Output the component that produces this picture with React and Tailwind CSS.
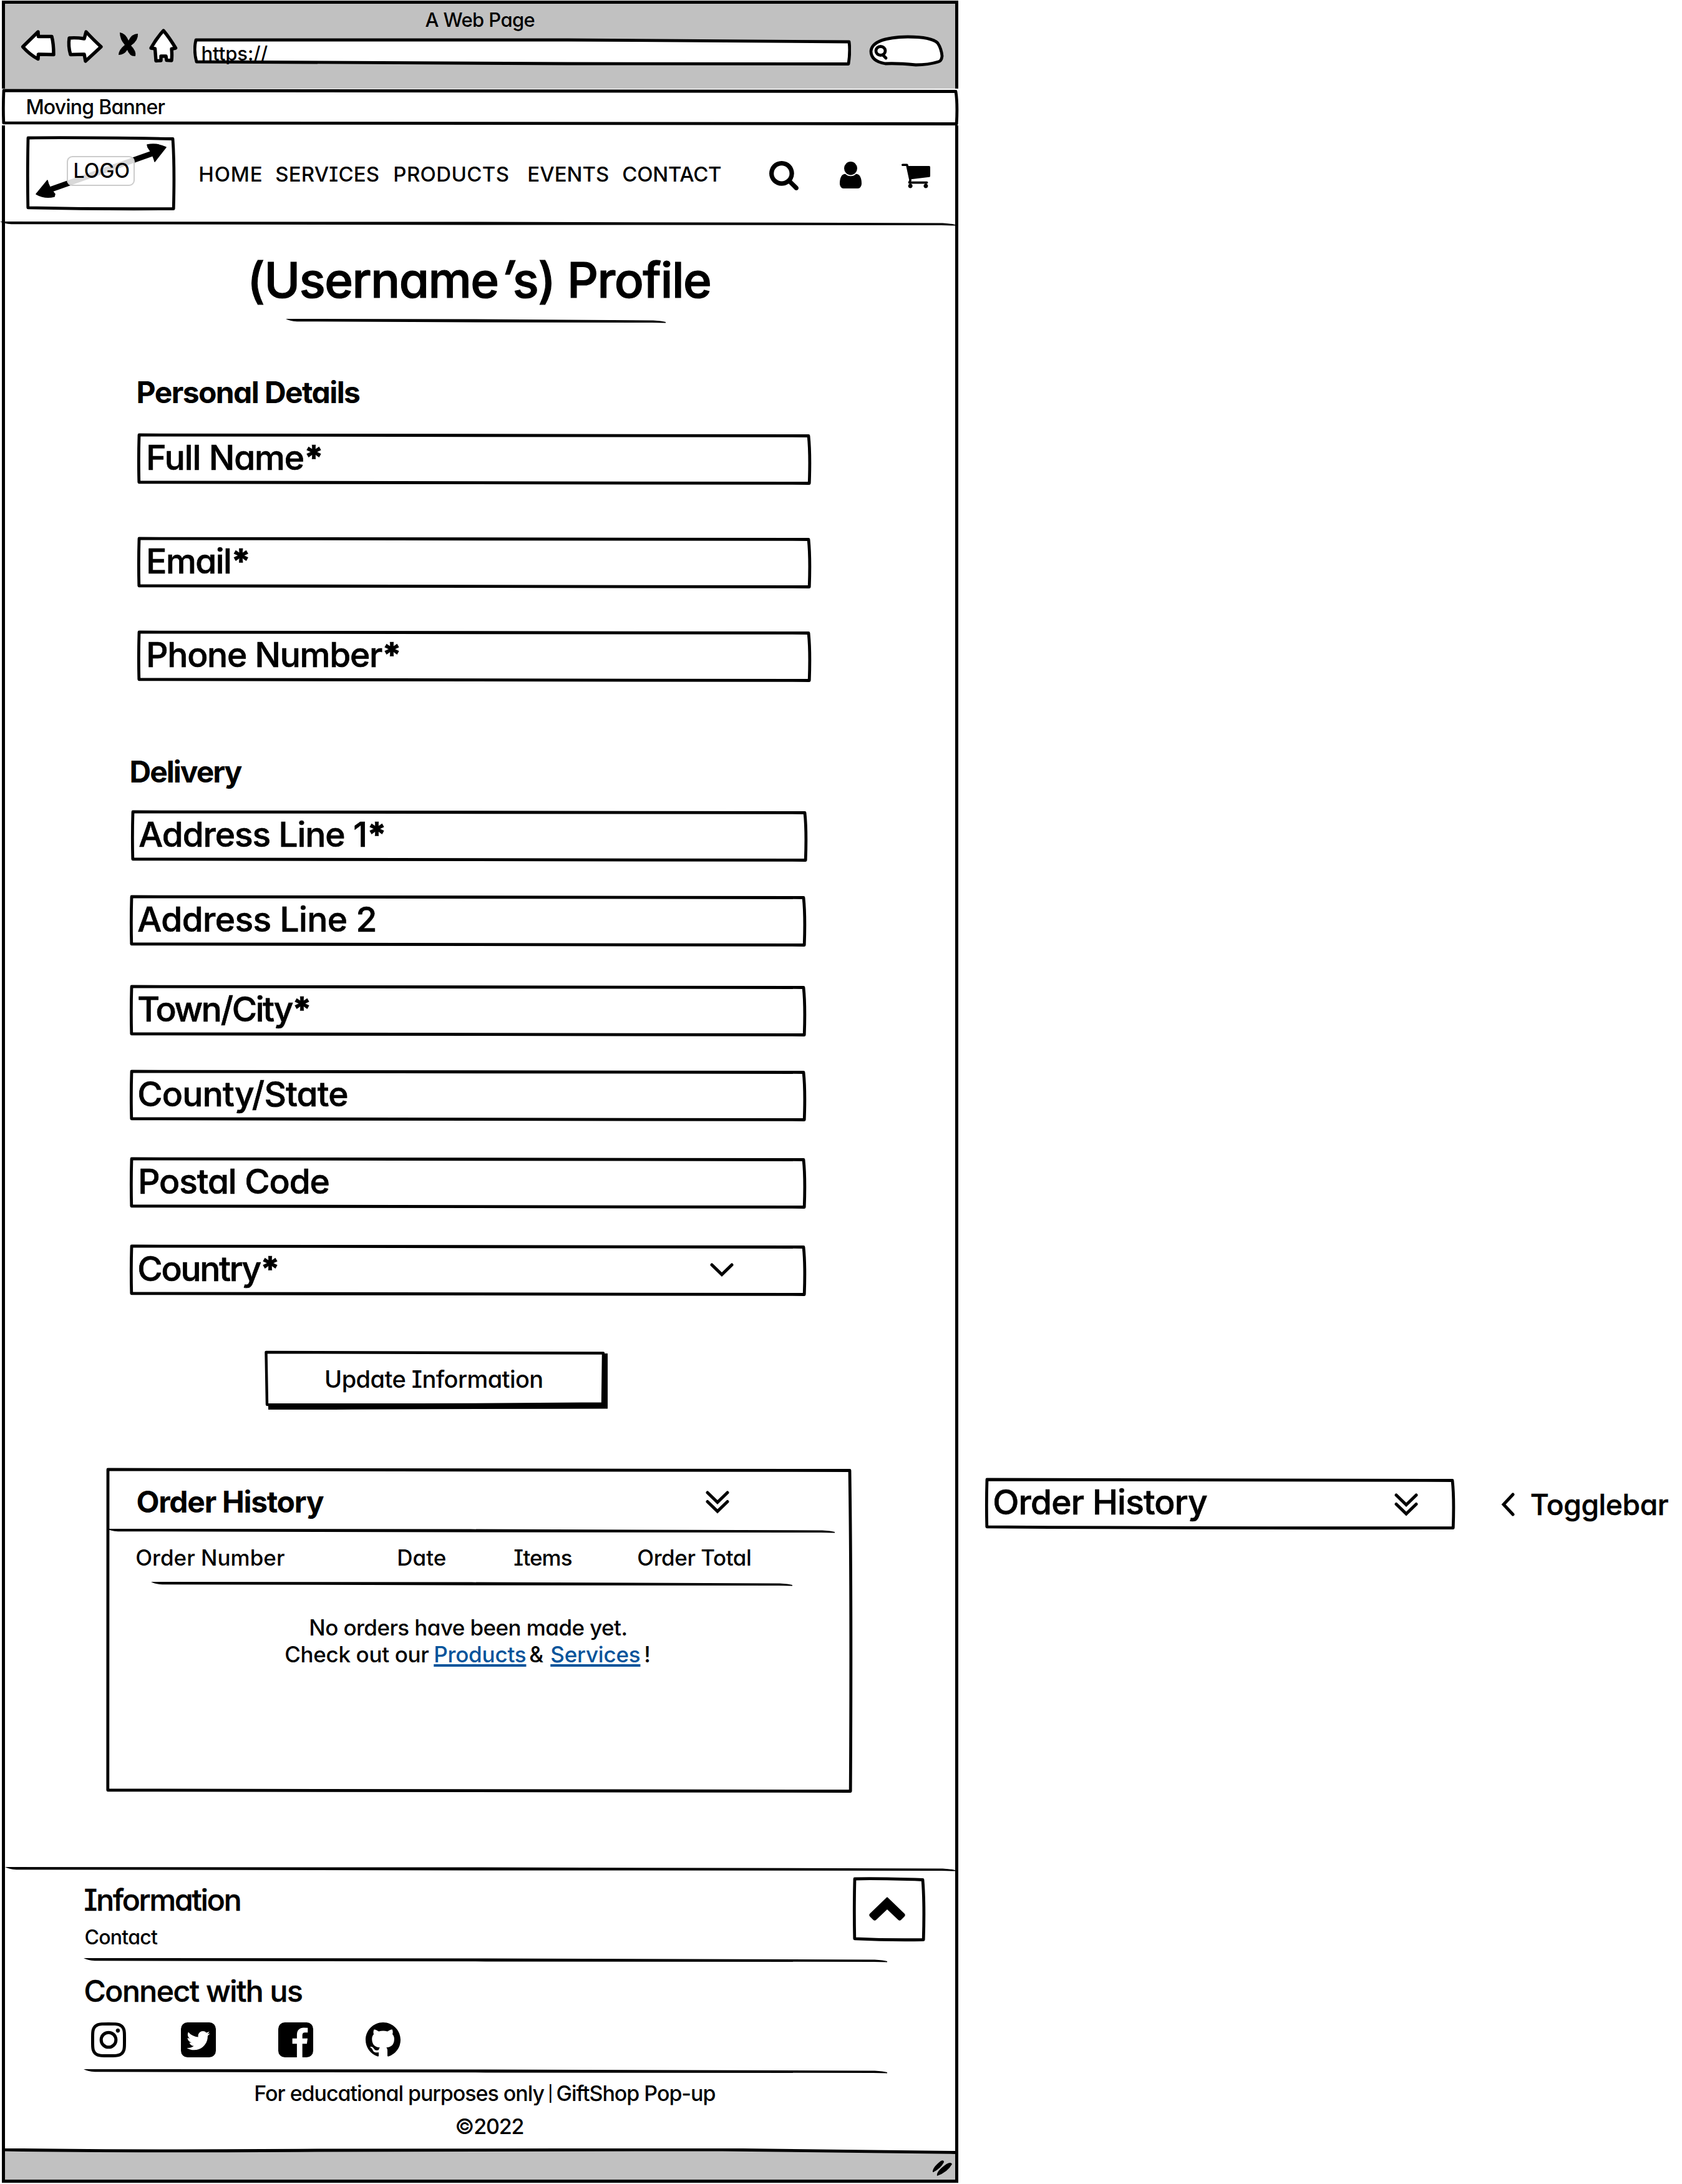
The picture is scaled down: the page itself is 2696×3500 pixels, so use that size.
import { useLayoutEffect, useRef } from "react";

/* Text that is tracked so that it fills the given width. */
function T({ w, className = "", children }) {
  const ref = useRef(null);
  useLayoutEffect(() => {
    const el = ref.current;
    el.style.letterSpacing = "0px";
    const size = parseFloat(getComputedStyle(el).fontSize);
    const natural = el.getBoundingClientRect().width;
    const count = Math.max(1, el.textContent.length);
    el.style.letterSpacing = (w + size * 0.12 - natural) / count + "px";
    el.style.marginLeft = -size * 0.05 + "px";
  }, [w]);
  return (
    <div className={"shrink-0 whitespace-nowrap " + className} style={{ width: w }}>
      <span ref={ref} className="relative top-px inline-block">{children}</span>
    </div>
  );
}

/* Hand-drawn rectangular outline laid over a box. */
function Outline({ w, h, stroke = 4.8 }) {
  const d = `M3 3 Q${w * 0.35} 2 ${w - 3} 4.5 Q${w} ${h * 0.4} ${w - 1.8} ${h - 2.5} Q${w * 0.5} ${h - 1.5} 2.8 ${h - 4.2} Q1.8 ${h * 0.5} 3 3Z`;
  return (
    <svg className="pointer-events-none absolute inset-0 overflow-visible" width={w} height={h} viewBox={`0 0 ${w} ${h}`} fill="none">
      <path d={d} stroke="#000" strokeWidth={stroke} strokeLinejoin="round" />
    </svg>
  );
}

/* Hand-drawn rule with tapered ends. */
function Rule({ w, className = "" }) {
  return (
    <svg className={"block shrink-0 " + className} width={w} height="8" viewBox={`0 0 ${w} 8`}>
      <path d={`M0 1 L${w * 0.5} 1.6 L${w - 20} 3.4 Q${w - 6} 4.2 ${w} 6 L${w} 7.6 L${w - 22} 7 L${w * 0.5} 6.4 L18 5.2 Q6 4.6 0 1Z`} />
    </svg>
  );
}

function Glyph({ d, size, className = "" }) {
  return (
    <svg className={"shrink-0 " + className} width={size} height={size} viewBox="128 128 1536 1536">
      <path d={d} />
    </svg>
  );
}

const SEARCH = "M1216 832q0-185-131.5-316.5t-316.5-131.5-316.5 131.5-131.5 316.5 131.5 316.5 316.5 131.5 316.5-131.5 131.5-316.5zm512 832q0 52-38 90t-90 38q-54 0-90-38l-343-342q-179 124-399 124-143 0-273.5-55.5t-225-150-150-225-55.5-273.5 55.5-273.5 150-225 225-150 273.5-55.5 273.5 55.5 225 150 150 225 55.5 273.5q0 220-124 399l343 343q37 37 37 90z";
const USER = "M1536 1399q0 109-62.5 187t-150.5 78h-854q-88 0-150.5-78t-62.5-187q0-85 8.5-160.5t31.5-152 58.5-131 94-89 134.5-34.5q131 128 313 128t313-128q76 0 134.5 34.5t94 89 58.5 131 31.5 152 8.5 160.5zm-256-887q0 159-112.5 271.5t-271.5 112.5-271.5-112.5-112.5-271.5 112.5-271.5 271.5-112.5 271.5 112.5 112.5 271.5z";
const CART = "M704 1536q0 52-38 90t-90 38-90-38-38-90 38-90 90-38 90 38 38 90zm896 0q0 52-38 90t-90 38-90-38-38-90 38-90 90-38 90 38 38 90zm128-1088v512q0 24-16.5 42.5t-40.5 21.5l-1044 122q13 60 13 70 0 16-24 64h920q26 0 45 19t19 45-19 45-45 19h-1024q-26 0-45-19t-19-45q0-11 8-31.5t16-36 21.5-40 15.5-29.5l-177-823h-204q-26 0-45-19t-19-45 19-45 45-19h256q16 0 28.5 6.5t19.5 15.5 13 24.5 8 26 5.5 29.5 4.5 26h1201q26 0 45 19t19 45z";
const INSTAGRAM = "M1152 896q0-106-75-181t-181-75-181 75-75 181 75 181 181 75 181-75 75-181zm138 0q0 164-115 279t-279 115-279-115-115-279 115-279 279-115 279 115 115 279zm108-410q0 38-27 65t-65 27-65-27-27-65 27-65 65-27 65 27 27 65zm-502-220q-7 0-76.5-.5t-105.5 0-96.5 3-103 10-71.5 18.5q-50 20-88 58t-58 88q-11 29-18.5 71.5t-10 103-3 96.5 0 105.5.5 76.5-.5 76.5 0 105.5 3 96.5 10 103 18.5 71.5q20 50 58 88t88 58q29 11 71.5 18.5t103 10 96.5 3 105.5 0 76.5-.5 76.5.5 105.5 0 96.5-3 103-10 71.5-18.5q50-20 88-58t58-88q11-29 18.5-71.5t10-103 3-96.5 0-105.5-.5-76.5.5-76.5 0-105.5-3-96.5-10-103-18.5-71.5q-20-50-58-88t-88-58q-29-11-71.5-18.5t-103-10-96.5-3-105.5 0-76.5.5zm768 630q0 229-5 317-10 208-124 322t-322 124q-88 5-317 5t-317-5q-208-10-322-124t-124-322q-5-88-5-317t5-317q10-208 124-322t322-124q88-5 317-5t317 5q208 10 322 124t124 322q5 88 5 317z";
const TWITTER = "M1408 610q-56 25-121 34 68-40 93-117-65 38-134 51-61-66-153-66-87 0-148.5 61.5t-61.5 148.5q0 29 5 48-129-7-242-65t-192-155q-29 50-29 106 0 114 91 175-47-1-100-26v2q0 75 50 133.5t123 72.5q-29 8-51 8-13 0-39-4 21 63 74.5 104t121.5 42q-116 90-261 90-26 0-50-3 148 94 322 94 112 0 210-35.5t168-95 120.5-137 75-162 24.5-168.5q0-18-1-27 63-45 105-109zm256-194v960q0 119-84.5 203.5t-203.5 84.5h-960q-119 0-203.5-84.5t-84.5-203.5v-960q0-119 84.5-203.5t203.5-84.5h960q119 0 203.5 84.5t84.5 203.5z";
const FACEBOOK = "M1376 128q119 0 203.5 84.5t84.5 203.5v960q0 119-84.5 203.5t-203.5 84.5h-188v-595h199l30-232h-229v-148q0-56 23.5-84t91.5-28l122-1v-207q-63-9-178-9-136 0-217.5 80t-81.5 226v171h-200v232h200v595h-532q-119 0-203.5-84.5t-84.5-203.5v-960q0-119 84.5-203.5t203.5-84.5h960z";
const GITHUB = "M8 0C3.58 0 0 3.58 0 8c0 3.54 2.29 6.53 5.47 7.59.4.07.55-.17.55-.38 0-.19-.01-.82-.01-1.49-2.01.37-2.53-.49-2.69-.94-.09-.23-.48-.94-.82-1.13-.28-.15-.68-.52-.01-.53.63-.01 1.08.58 1.23.82.72 1.21 1.87.87 2.33.66.07-.52.28-.87.51-1.07-1.78-.2-3.64-.89-3.64-3.95 0-.87.31-1.59.82-2.15-.08-.2-.36-1.02.08-2.12 0 0 .67-.21 2.2.82.64-.18 1.32-.27 2-.27.68 0 1.36.09 2 .27 1.53-1.04 2.2-.82 2.2-.82.44 1.1.16 1.92.08 2.12.51.56.82 1.27.82 2.15 0 3.07-1.87 3.75-3.65 3.95.29.25.54.73.54 1.48 0 1.07-.01 1.93-.01 2.2 0 .21.15.46.55.38A8.013 8.013 0 0016 8c0-4.42-3.58-8-8-8z";

function DoubleChevron({ className = "" }) {
  return (
    <svg className={"shrink-0 " + className} width="38" height="37" viewBox="0 0 38 37" fill="none" stroke="#000" strokeWidth="5" strokeLinecap="round">
      <path d="M3 3 L19 18.5 L35 3 M3 17.5 L19 33 L35 17.5" />
    </svg>
  );
}

function Field({ label, tw, w, className = "", inset = "pl-[15px]", children }) {
  return (
    <div className={"relative flex h-[83px] shrink-0 items-center pb-[6px] text-[55px] [-webkit-text-stroke:0.7px_#000] " + inset + " " + className} style={{ width: w }}>
      <Outline w={w} h={83} />
      <T w={tw}>{label}</T>
      {children}
    </div>
  );
}

function Star() {
  return <span className="font-extrabold">*</span>;
}

function Toolbar() {
  return (
    <div className="h-[136px] shrink-0 bg-[#c1c1c1]">
      <div className="flex h-[40px] items-center pt-[8px] pl-[675px] text-[31px]">
        <T w={172}>A Web Page</T>
      </div>
      <div className="flex h-[60px] items-start">
        <svg className="ml-[24px] shrink-0" width="270" height="60" viewBox="32 46 270 60" fill="#fff" stroke="#000" strokeWidth="5.4" strokeLinejoin="round">
          <path d="M36.5 75 L61 51 L61.5 58.5 L83 58.5 Q86 70 86 87.5 L61.5 87 L61 94.5 Q48 88 36.5 75Z" />
          <path d="M111 61 Q122 60 135 62 L138 51 Q148 62 162 75 L137 98 L135 87 L113 87.5 Q109 74 111 61Z" />
          <path d="M262 49 Q272 61 281.5 77 L275 78.5 Q276 88 275 97 L267 96.5 L266 90 L258 90 L258 97 L250 97.5 L248.5 78 L242 77 Q251 61 262 49Z" />
          <path d="M192 52 Q201 53 206 65 Q211 54 221 54 Q222 65 210 73 Q219 82 217 90 Q208 91 204 80 Q199 88 190 88 Q190 80 200 72 Q192 63 192 52Z" fill="#000" stroke="none" />
        </svg>
        <div className="relative mt-[15px] ml-[8px] flex h-[44px] w-[1054px] shrink-0 items-center pt-[2px] pl-[14px] text-[31px]">
          <svg className="absolute inset-0" width="1054" height="44" viewBox="0 0 1054 44">
            <path d="M4 3 L600 3 L1051 6 Q1053 22 1050 41.5 L600 41 L5 38 Q0 20 4 3Z" fill="#fff" stroke="#000" strokeWidth="4.8" strokeLinejoin="round" />
          </svg>
          <T w={103} className="relative">https://</T>
        </div>
        <svg className="mt-[10px] ml-[29px] shrink-0" width="120" height="51" viewBox="0 0 120 51" fill="#fff" stroke="#000" strokeWidth="4.8" strokeLinecap="round" strokeLinejoin="round">
          <path d="M26 46 Q3 42 3 26 Q5 4 62 3 Q100 3 110 13 Q116 22 117 34 Q116 42 111 43 Q95 48 75 48 Q45 45 26 46Z" />
          <ellipse cx="18.5" cy="25.5" rx="7.5" ry="7" />
          <path d="M22 32 L27 37" />
        </svg>
      </div>
    </div>
  );
}

function Header() {
  return (
    <div className="flex h-[153px] shrink-0 items-start">
      <div className="relative mt-[17px] ml-[34px] flex h-[119px] w-[238px] shrink-0 items-start">
        <svg className="absolute inset-0" width="238" height="119" viewBox="0 0 238 119">
          <path d="M24 91 L216 23" stroke="#000" strokeWidth="9" />
          <path d="M16 93 L34 71 Q36 82 46 93 L45 97 Q30 101 16 93Z M224 18 L206 41 Q203 29 195 18 L194 14 Q210 11 224 18Z" stroke="#000" strokeWidth="1.5" strokeLinejoin="round" />
        </svg>
        <Outline w={238} h={119} />
        <div className="relative mt-[32px] ml-[65px] flex h-[48px] w-[109px] items-center rounded-[9px] border-2 border-[#cccccc] bg-white/85 pb-[2px] pl-[10px] text-[32px]">
          <T w={87}>LOGO</T>
        </div>
      </div>
      <div className="mt-[59px] flex h-[36px] items-center text-[33px]">
        <T w={99} className="ml-[40px]">HOME</T>
        <T w={163} className="ml-[24px]">SERVICES</T>
        <T w={182} className="ml-[26px]">PRODUCTS</T>
        <T w={127} className="ml-[33px]">EVENTS</T>
        <T w={155} className="ml-[25px]">CONTACT</T>
      </div>
      <svg className="mt-[57px] ml-[79px] shrink-0" width="47" height="47" viewBox="64 128 1664 1664"><path d={SEARCH} /></svg>
      <svg className="mt-[58px] ml-[66px] shrink-0" width="35" height="43" viewBox="256 128 1280 1536" preserveAspectRatio="none"><path d={USER} /></svg>
      <svg className="mt-[61px] ml-[64px] shrink-0" width="46" height="40" viewBox="64 256 1664 1408"><path d={CART} /></svg>
    </div>
  );
}

function Orders() {
  return (
    <div className="relative mt-[93px] ml-[162px] flex h-[521px] w-[1195px] shrink-0 flex-col">
      <Outline w={1195} h={521} />
      <div className="flex h-[97px] shrink-0 items-center pt-[11px] pl-[51px] text-[48px] font-bold">
        <T w={294}>Order History</T>
        <DoubleChevron className="mt-[3px] ml-[616px]" />
      </div>
      <Rule w={1167} className="ml-[1px]" />
      <div className="flex h-[77px] shrink-0 items-center pl-[49px] text-[35px]">
        <T w={235}>Order Number</T>
        <T w={75} className="ml-[184px]">Date</T>
        <T w={89} className="ml-[112px]">Items</T>
        <T w={179} className="ml-[109px]">Order Total</T>
      </div>
      <Rule w={1028} className="ml-[72px]" />
      <div className="mt-[44px] text-[35px] leading-[43px]">
        <T w={506} className="ml-[327px]">No orders have been made yet.</T>
        <div className="ml-[288px] flex">
          <T w={227}>Check out our</T>
          <T w={144} className="ml-[12px] text-[#05549b] [&>span]:underline [&>span]:decoration-4 [&>span]:underline-offset-[3px] [&>span]:[text-decoration-skip-ink:none]">Products</T>
          <T w={23} className="ml-[9px]">&amp;</T>
          <T w={140} className="ml-[11px] text-[#05549b] [&>span]:underline [&>span]:decoration-4 [&>span]:underline-offset-[3px] [&>span]:[text-decoration-skip-ink:none]">Services</T>
          <T w={6} className="ml-[10px]">!</T>
        </div>
      </div>
    </div>
  );
}

function Footer() {
  return (
    <>
      <div className="flex h-[130px] shrink-0 items-start">
        <div className="ml-[129px] w-[1230px] shrink-0 pt-[21px]">
          <T w={245} className="text-[48px] leading-[48px] [-webkit-text-stroke:0.5px_#000]">Information</T>
          <T w={113} className="mt-[20px] text-[32px] leading-[32px]">Contact</T>
        </div>
        <div className="relative mt-[9px] h-[103px] w-[115px] shrink-0">
          <Outline w={115} h={103} />
          <svg className="mt-[31px] ml-[25px]" width="60" height="39" viewBox="0 0 60 39">
            <path d="M30 2 L57 28 Q59 30 57 32 L52 37 Q50 39 48 37 L30 20 L12 37 Q10 39 8 37 L3 32 Q1 30 3 28 Z" stroke="#000" strokeWidth="1.5" strokeLinejoin="round" />
          </svg>
        </div>
      </div>
      <Rule w={1288} className="mt-[8px] ml-[126px]" />
      <T w={344} className="mt-[21px] ml-[129px] text-[48px] leading-[48px] [-webkit-text-stroke:0.5px_#000]">Connect with us</T>
      <div className="mt-[27px] ml-[138px] flex h-[56px] shrink-0">
        <Glyph d={INSTAGRAM} size={56} />
        <Glyph d={TWITTER} size={56} className="ml-[88px]" />
        <Glyph d={FACEBOOK} size={56} className="ml-[100px]" />
        <svg className="ml-[84px] shrink-0" width="56" height="56" viewBox="0 0 16 16"><path d={GITHUB} /></svg>
      </div>
      <Rule w={1288} className="mt-[18px] ml-[126px]" />
      <T w={735} className="mt-[13px] ml-[401px] text-[34px] leading-[36px]">
        For educational purposes only <span className="relative -top-[3px] -mx-[2px] text-[25px]">|</span> GiftShop Pop-up
      </T>
      <T w={106} className="mt-[14px] ml-[723px] text-[34px] leading-[36px]">©2022</T>
      <div className="relative mt-auto h-[50px] shrink-0">
        <svg className="block" width="1523" height="50" viewBox="0 0 1523 50">
          <path d="M0 2 Q200 5 500 3 L1150 2 Q1380 4 1523 6.5 V50 H0Z" fill="#c1c1c1" />
          <path d="M0 2 Q200 5 500 3 L1150 2 Q1380 4 1523 6.5" fill="none" stroke="#000" strokeWidth="4.8" />
          <path d="M1487 38 Q1486 31 1500 20 Q1505 18 1505 22 Q1500 32 1488 38Z M1494 44 Q1492 37 1509 25 Q1516 21 1518 25 Q1511 38 1494 44Z" />
        </svg>
      </div>
    </>
  );
}

export default function App() {
  return (
    <div className="flex h-[3500px] w-[2696px] overflow-hidden bg-white font-['Inter',sans-serif] font-medium text-black [font-feature-settings:'cv11','cv08']">
      <div className="mt-px ml-[3px] flex h-[3497px] w-[1533px] shrink-0 flex-col border-[5px] border-black leading-none">
        <Toolbar />
        <div className="relative -mx-[5px] flex h-[59px] shrink-0 items-center bg-white pb-[2px] pl-[40px] text-[32px]">
          <Outline w={1532} h={59} />
          <T w={219}>Moving Banner</T>
        </div>
        <Header />
        <Rule w={1531} className="-ml-[8px]" />

        <T w={734} className="mt-[46px] ml-[392px] text-[78px] leading-[80px] [-webkit-text-stroke:1.2px_#000]">
          (Username<span className="inline-block -translate-y-[3px] -skew-x-[20deg]">'</span>s) Profile
        </T>
        <Rule w={609} className="mt-[22px] ml-[450px]" />

        <T w={352} className="mt-[86px] ml-[213px] text-[48px] leading-[48px] font-bold">Personal Details</T>
        <Field label={<>Full Name<Star /></>} tw={277} w={1079} className="mt-[42px] ml-[212px]" inset="pl-[17px]" />
        <Field label={<>Email<Star /></>} tw={160} w={1079} className="mt-[83px] ml-[212px]" inset="pl-[17px]" />
        <Field label={<>Phone Number<Star /></>} tw={402} w={1079} className="mt-[67px] ml-[212px]" inset="pl-[17px]" />

        <T w={173} className="mt-[119px] ml-[202px] text-[48px] leading-[48px] font-bold">Delivery</T>
        <Field label={<>Address Line 1<Star /></>} tw={390} w={1083} className="mt-[38px] ml-[202px]" />
        <Field label="Address Line 2" tw={377} w={1083} className="mt-[53px] ml-[200px]" />
        <Field label={<>Town/City<Star /></>} tw={271} w={1083} className="mt-[61px] ml-[200px]" />
        <Field label="County/State" tw={331} w={1083} className="mt-[53px] ml-[200px]" />
        <Field label="Postal Code" tw={300} w={1083} className="mt-[57px] ml-[200px]" inset="pl-[16px]" />
        <Field label={<>Country<Star /></>} tw={220} w={1083} className="mt-[57px] ml-[200px]">
          <svg className="mt-[4px] ml-[695px] shrink-0" width="38" height="22" viewBox="0 0 38 22" fill="none" stroke="#000" strokeWidth="5" strokeLinecap="round">
            <path d="M3 3 L19 18.5 L35 3" />
          </svg>
        </Field>

        <div className="relative mt-[87px] ml-[416px] flex h-[95px] w-[550px] shrink-0 items-center pb-[6px] pl-[98px] text-[38px]">
          <svg className="absolute inset-0" width="550" height="95" viewBox="0 0 550 95">
            <path d="M6 5 H550 V93.5 Q200 94 6 95.5Z" />
            <path d="M2.5 3 L543 4.5 L542 85.5 Q270 88 4 87 Z" fill="#fff" stroke="#000" strokeWidth="4.4" strokeLinejoin="round" />
          </svg>
          <T w={346} className="relative">Update Information</T>
        </div>

        <Orders />
        <Rule w={1523} className="mt-[118px]" />
        <Footer />
      </div>

      <div className="mt-[2368px] ml-[43px] flex h-[83px] items-center leading-none">
        <Field label="Order History" tw={337} w={752}>
          <DoubleChevron className="mt-[10px] ml-[304px]" />
        </Field>
        <svg className="mt-[3px] ml-[75px] shrink-0" width="22" height="38" viewBox="0 0 22 38" fill="none" stroke="#000" strokeWidth="5" strokeLinecap="round">
          <path d="M19 3 L4 19 L19 35" />
        </svg>
        <T w={216} className="ml-[27px] text-[46px] [-webkit-text-stroke:0.5px_#000]">Togglebar</T>
      </div>
    </div>
  );
}
